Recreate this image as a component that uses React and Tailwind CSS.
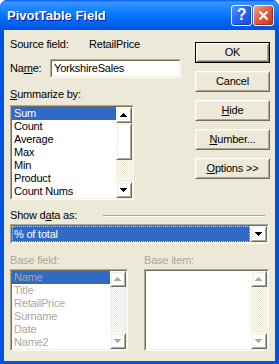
import React from "react";

const raised =
  "border border-t-white border-l-white border-r-[#716f64] border-b-[#716f64] shadow-[inset_1px_1px_#f1efe2,inset_-1px_-1px_#aca899]";
const track =
  "bg-[conic-gradient(#fff_25%,#ece9d8_0_50%,#fff_0_75%,#ece9d8_0)] bg-[length:2px_2px]";
const sunkOuter = "border border-t-[#aca899] border-l-[#aca899] border-r-white border-b-white";
const sunkInner = "border border-t-[#716f64] border-l-[#716f64] border-r-[#f1efe2] border-b-[#f1efe2]";

function Arrow({ dir = "up", disabled }) {
  const d =
    dir === "up"
      ? "M3 0h1v1H3zM2 1h3v1H2zM1 2h5v1H1zM0 3h7v1H0z"
      : "M0 0h7v1H0zM1 1h5v1H1zM2 2h3v1H2zM3 3h1v1H3z";
  return (
    <svg width="8" height="5" viewBox="0 0 8 5" shapeRendering="crispEdges">
      {disabled && <path d={d} fill="#fff" transform="translate(1 1)" />}
      <path d={d} fill={disabled ? "#aca899" : "#000"} />
    </svg>
  );
}

function ScrollBtn({ dir, disabled }) {
  return (
    <div className={`flex h-[16px] w-[16px] items-center justify-center ${raised}`}>
      <Arrow dir={dir} disabled={disabled} />
    </div>
  );
}

function ScrollBar({ thumb, disabled }) {
  return (
    <div className="flex w-[16px] shrink-0 flex-col">
      <ScrollBtn dir="up" disabled={disabled} />
      {thumb && <div className={`h-[37px] ${raised}`} />}
      <div className={`flex-1 ${track}`} />
      <ScrollBtn dir="down" disabled={disabled} />
    </div>
  );
}

function ListBox({ items = [], selected, disabled, thumb, className }) {
  return (
    <div className={`${sunkOuter} ${className}`}>
      <div className={`flex h-full bg-white ${sunkInner}`}>
        <div className="flex-1 overflow-hidden">
          {items.map((it) => (
            <div
              key={it}
              className={`h-[13px] pl-[2px] leading-[13px] ${
                it === selected ? "bg-[#316ac5]" : ""
              } ${disabled ? "text-[#aca899]" : it === selected ? "text-white" : "text-black"}`}
            >
              {it}
            </div>
          ))}
        </div>
        <ScrollBar thumb={thumb} disabled={disabled} />
      </div>
    </div>
  );
}

function Btn({ children, def }) {
  if (def)
    return (
      <div className="h-[21px] w-[75px] border border-black">
        <div className={`flex h-full items-center justify-center ${raised}`}>{children}</div>
      </div>
    );
  return (
    <div className={`flex h-[21px] w-[75px] items-center justify-center ${raised}`}>{children}</div>
  );
}

export default function App() {
  return (
    <div className="h-[364px] w-[279px] bg-white font-['Liberation_Sans',Arial,sans-serif] text-[11px] leading-[13px] tracking-[-0.2px] text-black">
      <div className="flex h-full flex-col overflow-hidden rounded-t-[7px] bg-[#0054e3]">
        {/* Title bar */}
        <div className="flex h-[30px] shrink-0 items-center bg-[linear-gradient(to_bottom,#0058ee_0%,#3a93ff_7%,#288eff_18%,#127dff_40%,#036ffc_60%,#0262ee_82%,#0057e5_92%,#0054e3_100%)] pl-[7px] pr-[5px]">
          <span className="text-[13px] font-bold tracking-normal text-white [text-shadow:1px_1px_#0a1883]">
            PivotTable Field
          </span>
          <div className="ml-auto flex gap-[1px]">
            <div className="flex h-[21px] w-[21px] items-center justify-center rounded-[3px] border border-white bg-[linear-gradient(135deg,#5c95fb,#2a64ee_45%,#1c4fd9)] shadow-[inset_-1px_-1px_#1941b8]">
              <span className="text-[16px] font-bold leading-none text-white">?</span>
            </div>
            <div className="flex h-[21px] w-[21px] items-center justify-center rounded-[3px] border border-white bg-[linear-gradient(135deg,#f0a088,#e2603f_45%,#c4391c)] shadow-[inset_-1px_-1px_#a82c10]">
              <svg width="11" height="11" viewBox="0 0 11 11">
                <path d="M1.5 1.5l8 8M9.5 1.5l-8 8" stroke="#fff" strokeWidth="2.2" />
              </svg>
            </div>
          </div>
        </div>

        {/* Client area */}
        <div className="mx-[4px] mb-[3px] flex flex-1 flex-col bg-[#ece9d8] pl-[6px] pr-[5px]">
          <div className="flex justify-between">
            <div className="flex flex-col">
              <div className="mt-[8px] flex h-[13px]">
                <span className="w-[79px]">Source field:</span>
                <span>RetailPrice</span>
              </div>
              <div className="mt-[8px] flex h-[19px] items-center">
                <span className="w-[40px]">
                  Na<span className="underline">m</span>e:
                </span>
                <div className={`h-[19px] w-[131px] ${sunkOuter}`}>
                  <div className={`flex h-full items-center bg-white pl-[2px] ${sunkInner}`}>
                    YorkshireSales
                  </div>
                </div>
              </div>
              <div className="mt-[10px] h-[13px]">
                <span className="underline">S</span>ummarize by:
              </div>
              <ListBox
                className="mt-[4px] h-[95px] w-[124px]"
                items={["Sum", "Count", "Average", "Max", "Min", "Product", "Count Nums"]}
                selected="Sum"
                thumb
              />
            </div>
            <div className="flex flex-col gap-[8px] pt-[12px]">
              <Btn def>OK</Btn>
              <Btn>Cancel</Btn>
              <Btn>
                <span className="underline">H</span>ide
              </Btn>
              <Btn>
                <span className="underline">N</span>umber...
              </Btn>
              <Btn>
                <span className="underline">O</span>ptions &gt;&gt;
              </Btn>
            </div>
          </div>

          <div className="mt-[9px] flex h-[13px] items-center">
            <span className="w-[93px] shrink-0">
              Show d<span className="underline">a</span>ta as:
            </span>
            <div className="mr-[5px] h-[2px] flex-1 border-t border-b border-t-[#aca899] border-b-white" />
          </div>
          <div className={`mt-[2px] h-[20px] w-[259px] ${sunkOuter}`}>
            <div className={`flex h-full bg-white ${sunkInner}`}>
              <div className="flex-1 border border-dotted border-[#d8d27c] bg-[#316ac5] pl-px leading-[14px] text-white">
                % of total
              </div>
              <div className={`flex w-[17px] items-center justify-center ${raised}`}>
                <Arrow dir="down" />
              </div>
            </div>
          </div>

          <div className="mt-[10px] flex h-[13px] text-[#aca899]">
            <span className="w-[134px]">Base field:</span>
            <span>Base item:</span>
          </div>
          <div className="mt-[2px] flex">
            <ListBox
              className="h-[82px] w-[118px]"
              items={["Name", "Title", "RetailPrice", "Surname", "Date", "Name2"]}
              selected="Name"
              disabled
            />
            <ListBox className="ml-[16px] h-[82px] w-[125px]" disabled />
          </div>
        </div>
      </div>
    </div>
  );
}
